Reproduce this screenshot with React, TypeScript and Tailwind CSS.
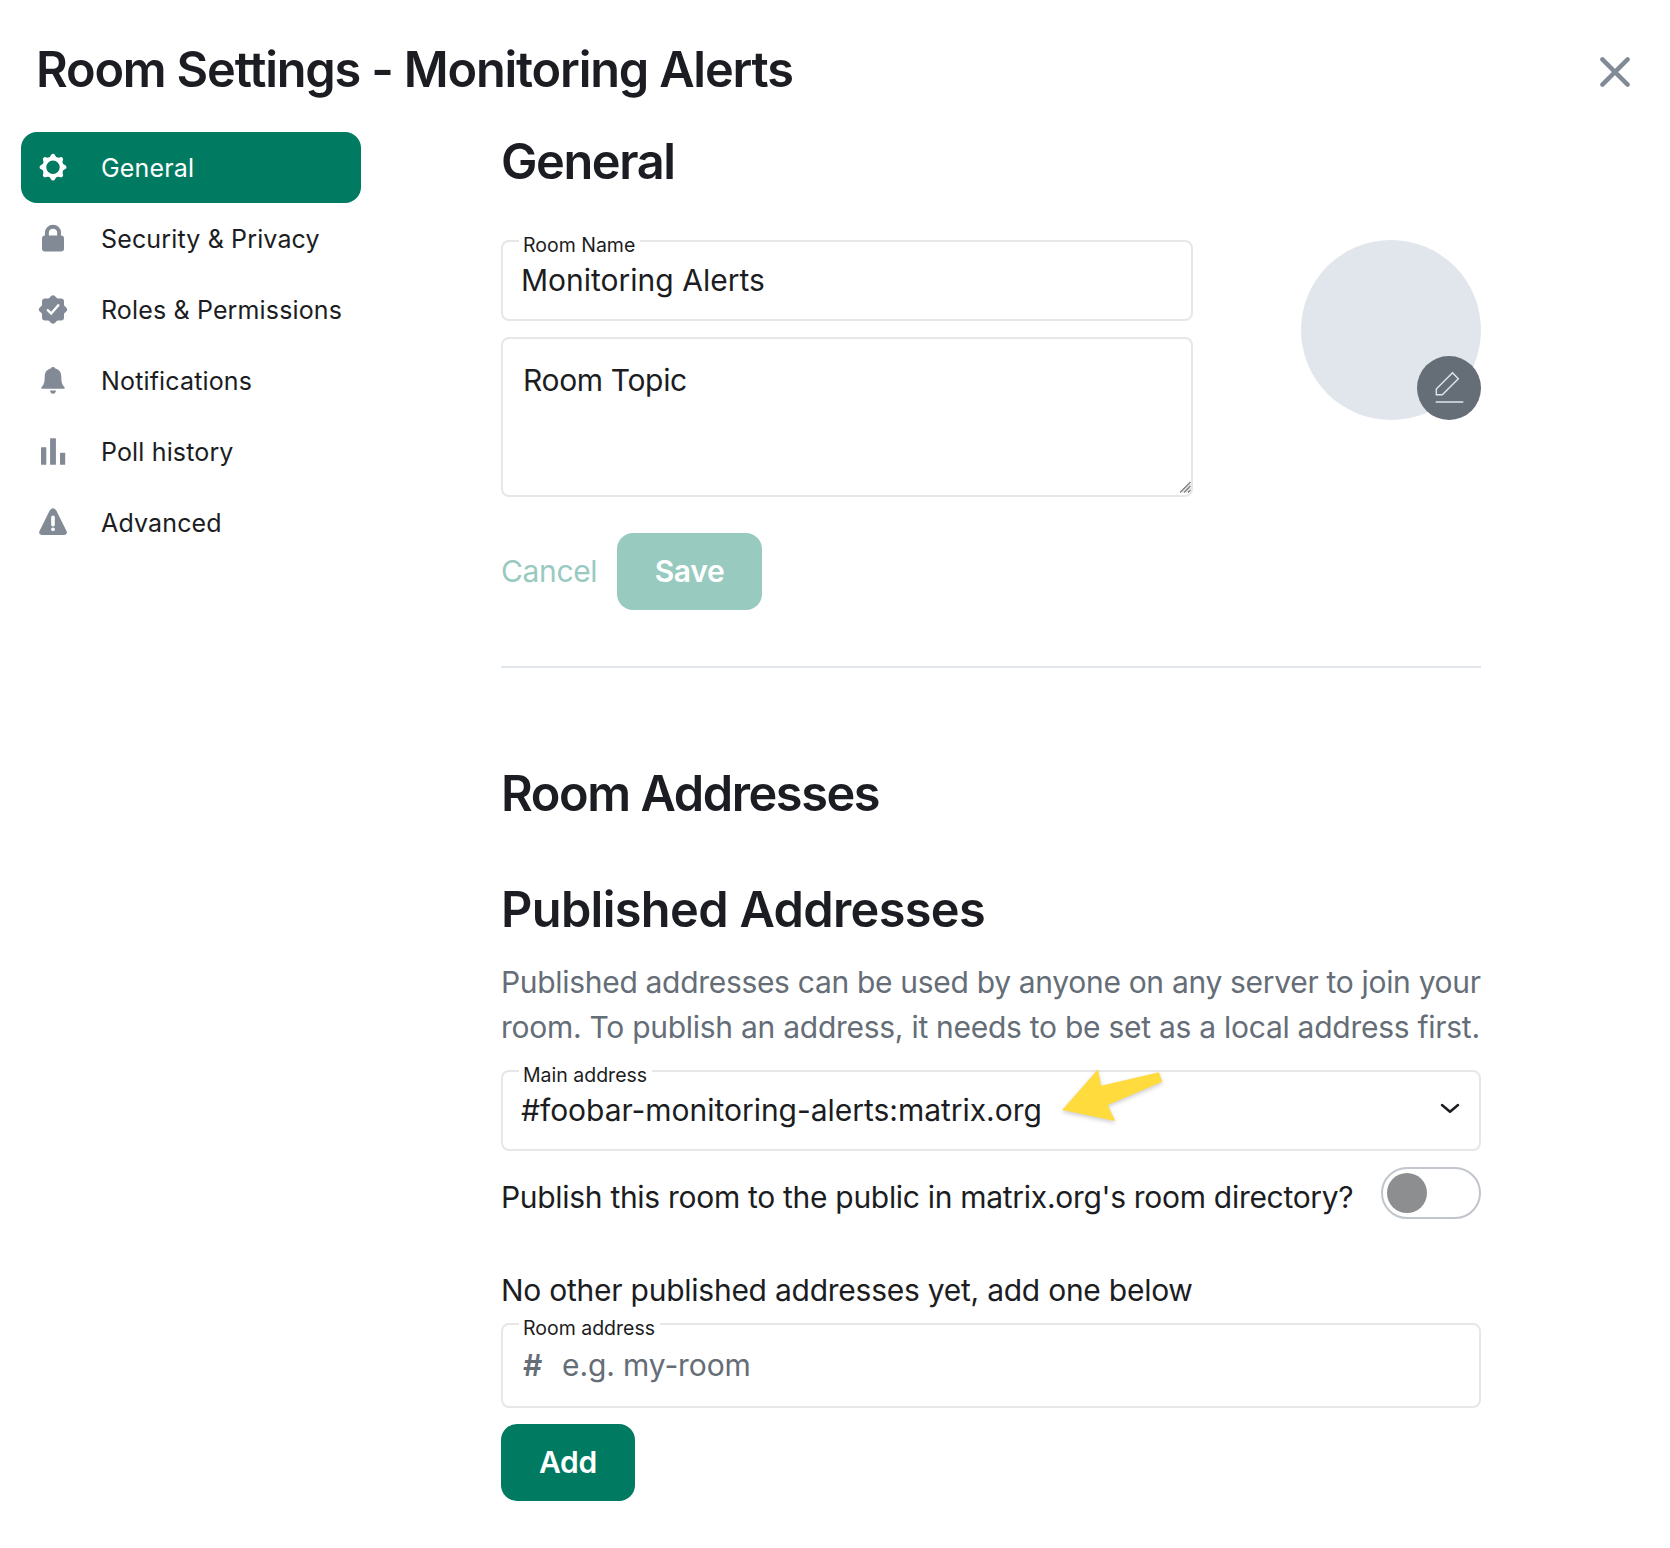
import React from "react";

type Tab = { label: string; icon: React.ReactNode };

const tabs: Tab[] = [
  {
    label: "General",
    icon: (
      <>
        <circle cx="16" cy="16" r="8.7" fill="none" stroke="currentColor" strokeWidth="4" />
        {[0, 45, 90, 135, 180, 225, 270, 315].map((a) => (
          <path key={a} d="M12.600 6.400L14.100 3.700Q14.600 2.600 16 2.600Q17.400 2.600 17.900 3.700L19.400 6.400Z" transform={`rotate(${a} 16 16)`} />
        ))}
      </>
    ),
  },
  {
    label: "Security & Privacy",
    icon: (
      <>
        <path d="M9.900 15V10.600a6.100 6.100 0 0 1 12.200 0V15" fill="none" stroke="currentColor" strokeWidth="3.900" />
        <rect x="5" y="13.400" width="22" height="15.900" rx="3" />
      </>
    ),
  },
  {
    label: "Roles & Permissions",
    icon: (
      <>
        <rect x="5" y="5.300" width="22" height="22" rx="3" />
        <rect x="5.200" y="5.500" width="21.600" height="21.600" rx="3" transform="rotate(45 16 16.300)" />
        <path d="M10.800 17L14.200 20.300L21.300 12.100" fill="none" stroke="#fff" strokeWidth="2.400" strokeLinecap="round" />
      </>
    ),
  },
  {
    label: "Notifications",
    icon: (
      <>
        <path d="M16 2.900Q17.800 2.900 18.300 4.300C22.500 5.300 24.300 8.500 24.300 12.500C24.300 18 25 20.500 27.500 22.800Q28.500 24.600 26.700 24.600H5.300Q3.500 24.600 4.500 22.800C7 20.500 7.700 18 7.700 12.500C7.700 8.500 9.500 5.300 13.700 4.300Q14.200 2.900 16 2.900Z" />
        <path d="M13 26.400H19Q18.700 29.500 16 29.500Q13.300 29.500 13 26.400Z" />
      </>
    ),
  },
  {
    label: "Poll history",
    icon: (
      <>
        <rect x="4" y="12" width="5.300" height="17.500" rx=".5" />
        <rect x="13.100" y="3" width="5.800" height="26.500" rx=".5" />
        <rect x="23" y="17.500" width="5.200" height="12" rx=".5" />
      </>
    ),
  },
  {
    label: "Advanced",
    icon: (
      <>
        <path d="M12.700 4.300Q16 0 19.300 4.300L29.500 24.800Q30.900 28.500 27.200 28.800H4.800Q1.100 28.500 2.500 24.800Z" />
        <path d="M16 11V18.500" stroke="#fff" strokeWidth="3.600" strokeLinecap="round" />
        <circle cx="16" cy="23.100" r="1.900" fill="#fff" />
      </>
    ),
  },
];

function Legend({ children }: { children: React.ReactNode }) {
  return (
    <span className="absolute -top-2 left-4 bg-white pr-[5px] pl-1 text-[19.5px] leading-[23px] tracking-normal whitespace-nowrap">
      {children}
    </span>
  );
}

const fieldBox = "relative rounded-lg border-2 border-[#e7e7e7]";
const heading = "text-[48.7px] leading-[58px] font-semibold whitespace-nowrap";

export default function App() {
  return (
    <div className="h-[1548px] w-[1670px] overflow-hidden bg-white font-['Inter',sans-serif] text-[30px] leading-[45px] tracking-[-0.27px] text-[#1b1d22]">
      <header className="flex h-[133px] items-start justify-between pt-[41px] pr-10 pl-9">
        <h1 className={`${heading} tracking-[-1.19px]`}>Room Settings - Monitoring Alerts</h1>
        <button aria-label="Close" className="mt-4 text-[#818a95]">
          <svg width="30" height="30" viewBox="0 0 30 30" fill="none" stroke="currentColor" strokeWidth="4.400" strokeLinecap="round">
            <path d="M2.400 2.400L27.600 27.600M27.600 2.400L2.400 27.600" />
          </svg>
        </button>
      </header>

      <div className="flex">
        <nav className="-mt-px ml-[21px] w-[340px] shrink-0 text-[25px] tracking-[0.15px]">
          {tabs.map((tab, i) => (
            <div
              key={tab.label}
              className={
                i === 0
                  ? "flex h-[71px] items-center rounded-2xl bg-[#007a61] pl-4 text-white"
                  : "flex h-[71px] items-center pl-4"
              }
            >
              <svg width="32" height="32" viewBox="0 0.8 32 32" fill="currentColor" className={i === 0 ? "text-white" : "text-[#828a96]"}>
                {tab.icon}
              </svg>
              <span className="ml-8 leading-8 whitespace-nowrap">{tab.label}</span>
            </div>
          ))}
        </nav>

        <main className="ml-[140px] w-[980px]">
          <h2 className={`${heading} tracking-[-1.4px]`}>General</h2>

          <div className="mt-[49px] flex justify-between">
            <div className="w-[692px]">
              <div className={`${fieldBox} h-[81px] pt-4 pl-[18px] tracking-normal`}>
                <Legend>Room Name</Legend>
                Monitoring Alerts
              </div>
              <div className={`${fieldBox} mt-4 h-[160px] pt-[19px] pl-5 tracking-[-0.35px]`}>
                Room Topic
                <svg className="absolute right-0 bottom-0.5" width="12" height="12" viewBox="0 0 12 12" stroke="#777" strokeWidth="1.100">
                  <path d="M1 11.500L11.500 1M5 11.500L11.500 5M9 11.500L11.500 9" />
                  <path d="M3 11.500L11.500 3M7 11.500L11.500 7" stroke="#d5d5d5" />
                </svg>
              </div>
            </div>
            <div className="relative size-[180px] rounded-full bg-[#e1e6ec]">
              <div className="absolute right-0 bottom-0 size-16 rounded-full bg-[#656d77]">
                <svg width="64" height="64" viewBox="0 0 64 64" fill="none" stroke="#e1e6ec" strokeWidth="1.400">
                  <path d="M35.500 16.800L41.300 22.800L25.300 38.800H19.300V33Z" />
                  <path d="M18.700 46H46.300" strokeWidth="1.900" stroke="#c8ccd2" />
                </svg>
              </div>
            </div>
          </div>

          <div className="mt-9 flex h-[77px] items-center tracking-[-0.35px]">
            <span className="w-[116px] text-[#99cabf]">Cancel</span>
            <button className="h-[77px] w-[145px] rounded-2xl bg-[#99cabf] font-semibold text-white">Save</button>
          </div>

          <hr className="mt-14 border-t-2 border-[#e1e6ec]" />

          <h2 className={`${heading} mt-[97px] tracking-[-1.42px]`}>Room Addresses</h2>
          <h2 className={`${heading} mt-[58px] tracking-[-0.66px]`}>Published Addresses</h2>

          <p className="mt-[21px] whitespace-nowrap text-[#656d77]">
            <span className="tracking-[-0.31px]">Published addresses can be used by anyone on any server to join your</span>
            <br />
            room. To publish an address, it needs to be set as a local address first.
          </p>

          <div className={`${fieldBox} mt-5 flex h-[81px] items-start justify-between pt-4 pl-[18px] tracking-[-0.03px]`}>
            <Legend>Main address</Legend>
            <span>#foobar-monitoring-alerts:matrix.org</span>
            <svg className="mt-[14px] mr-[19px]" width="20" height="14" viewBox="0 0 20 14" fill="none" stroke="#1b1d22" strokeWidth="2.500" strokeLinecap="round" strokeLinejoin="round">
              <path d="M2 3L10 9.800L18 3" />
            </svg>
            <svg className="absolute -top-3 left-[552px] overflow-visible drop-shadow-[0_2px_2px_rgba(0,0,0,0.2)]" width="110" height="66" viewBox="0 0 110 66" fill="#ffdb3d">
              <path d="M7.200 50L43 9.300L46.200 25.700L104 12.300L107.200 21.700L52.700 45L60.200 61Z" />
            </svg>
          </div>

          <div className="mt-4 flex h-[52px] items-center justify-between">
            <span className="pt-2 tracking-[-0.3px]">Publish this room to the public in matrix.org's room directory?</span>
            <div className="flex h-[52px] w-[100px] items-center rounded-full border-2 border-[#c1c6cd] pl-1">
              <div className="size-10 rounded-full bg-[#8d8e90]" />
            </div>
          </div>

          <p className="mt-[49px] tracking-[-0.25px]">No other published addresses yet, add one below</p>

          <div className={`${fieldBox} mt-[10px] flex h-[85px] pt-[18px] pl-5 tracking-[-0.1px] text-[#656d77]`}>
            <span className="text-[#1b1d22]"><Legend>Room address</Legend></span>
            <span className="w-[39px] font-semibold">#</span>
            <span>e.g. my-room</span>
          </div>

          <button className="mt-4 block h-[77px] w-[134px] rounded-2xl bg-[#007a61] font-semibold text-white">Add</button>
        </main>
      </div>
    </div>
  );
}
